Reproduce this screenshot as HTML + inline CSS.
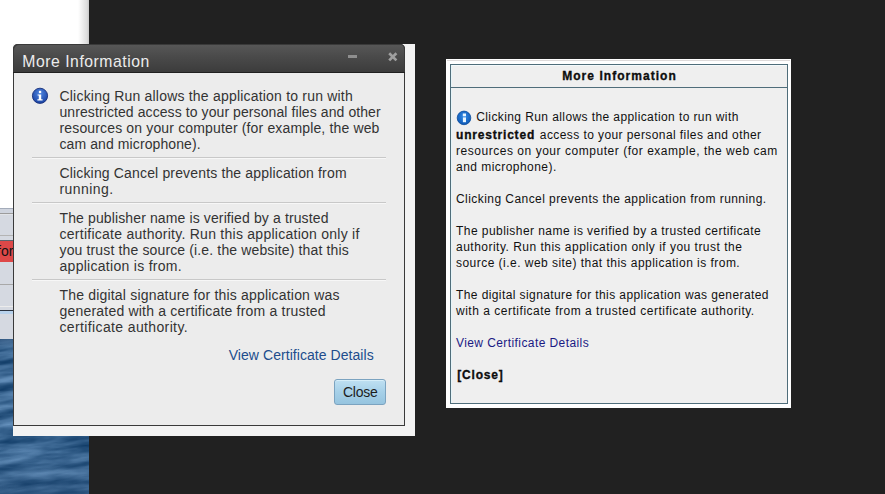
<!DOCTYPE html>
<html><head><meta charset="utf-8">
<style>
html,body{margin:0;padding:0;}
body{width:885px;height:494px;overflow:hidden;position:relative;background:#212121;font-family:"Liberation Sans",sans-serif;}
.a{position:absolute;}
.t{position:absolute;white-space:pre;line-height:16px;}
#pg{left:0;top:0;width:89px;height:208px;background:linear-gradient(to right,#fff 0,#fff 78px,#dcdcdc 87px,#c8c8c8 89px);}
#tbl{left:0;top:208px;width:89px;height:131px;background:#d5d9e1;}

#lpanel{left:13px;top:44px;width:402px;height:392px;background:#f3f3f3;}
#ldlg{left:13px;top:44px;width:390px;height:381px;background:#ececec;border:1px solid #3a3a3a;border-top:none;border-radius:5px 5px 0 0;}
#ltitle{left:-1px;top:0;width:392px;height:28px;border-radius:5px 5px 0 0;background:linear-gradient(#585858,#4a4a4a 45%,#3c3c3c);border-bottom:1px solid #202020;box-shadow:inset 1px 1px 0 #3a3a3a,inset -1px 0 0 #3a3a3a;}
.lt{font-size:14px;color:#333;}
.llink{color:#214c8c;}
.ltitle{font-size:15.75px;color:#ececec;}
.lbtn{font-size:14px;color:#1c1c1c;}
.sep{position:absolute;left:32px;width:354px;height:1px;background:#c8c8c8;box-shadow:0 1px 0 #f7f7f7;}
#btn{left:334px;top:379px;width:50px;height:24px;border:1px solid #7ba3c0;border-radius:3px;background:linear-gradient(#bfe0f2,#a6d0e8 50%,#96c4df);box-shadow:inset 0 1px 0 #d6eef9;}
#rpanel{left:446px;top:59px;width:345px;height:349px;background:#fff;}
#rbox{left:450px;top:64px;width:336px;height:338px;border:1px solid #4f6d7a;background:#efefef;box-shadow:inset 1px 0 0 #e6f4f8,inset 0 1px 0 #f4fafc;}
#rhead{left:0;top:0;width:336px;height:22px;border-bottom:1px solid #4f6d7a;}
.rt{font-size:12px;color:#111;}
.rb{font-weight:bold;-webkit-text-stroke:0.3px #000;}
.rlink{color:#1a1a84;}
</style></head><body>
<div class="a" id="pg"></div>
<div class="a" id="tbl">
 <div class="a" style="left:0;top:0;width:89px;height:1px;background:#a4acba"></div>
 <div class="a" style="left:0;top:1px;width:89px;height:5px;background:#cfd4de"></div>
 <div class="a" style="left:0;top:5px;width:89px;height:1px;background:#9c9c9c"></div>
 <div class="a" style="left:0;top:6px;width:89px;height:1px;background:#e2e4e8"></div>
 <div class="a" style="left:0;top:27px;width:89px;height:1px;background:#b4b4b4"></div>
 <div class="a" style="left:0;top:32px;width:89px;height:1px;background:#5a6470"></div>
 <div class="a" style="left:0;top:33px;width:89px;height:21px;background:#de4848"></div>
 <div class="t" style="left:-3px;top:35px;font-size:14px;color:#111">for</div>
 <div class="a" style="left:0;top:76px;width:89px;height:1px;background:#a8a8a8"></div>
 <div class="a" style="left:0;top:98px;width:89px;height:1px;background:#ececec"></div>
 <div class="a" style="left:0;top:102px;width:89px;height:1px;background:#2a3340"></div>
 <div class="a" style="left:0;top:103px;width:89px;height:3px;background:#b8d2ec"></div>
</div>
<svg class="a" id="ocean" width="89" height="155" style="left:0;top:339px">
 <defs>
 <filter id="wf" x="0" y="0" width="100%" height="100%" color-interpolation-filters="sRGB"><feTurbulence type="fractalNoise" baseFrequency="0.018 0.11" numOctaves="4" seed="11"/><feColorMatrix type="matrix" values="0.5 0 0 0 -0.02  0.5 0 0 0 0.15  0.5 0 0 0 0.32  0 0 0 0 1"/></filter>
 <linearGradient id="og" x1="0" y1="0" x2="0" y2="1"><stop offset="0" stop-color="#1d3f66" stop-opacity="0.55"/><stop offset="0.06" stop-color="#1d3f66" stop-opacity="0"/><stop offset="0.7" stop-color="#1d3f66" stop-opacity="0"/><stop offset="1" stop-color="#1d3f66" stop-opacity="0.3"/></linearGradient>
 </defs>
 <g transform="skewY(-6)"><rect x="0" y="-20" width="89" height="200" filter="url(#wf)"/></g>
 <rect width="89" height="155" fill="url(#og)"/>
</svg>

<div class="a" id="lpanel"></div>
<div class="a" id="ldlg"><div class="a" id="ltitle"></div></div>
<div class="sep" style="top:157px"></div>
<div class="sep" style="top:202px"></div>
<div class="sep" style="top:279px"></div>
<svg class="a" style="left:0;top:0" width="885" height="494">
 <defs>
  <radialGradient id="ig1" cx="0.5" cy="0.35" r="0.6"><stop offset="0" stop-color="#4f86e0"/><stop offset="1" stop-color="#1f48a8"/></radialGradient>
  <radialGradient id="ig2" cx="0.5" cy="0.4" r="0.6"><stop offset="0" stop-color="#2f8ae8"/><stop offset="1" stop-color="#0f58b4"/></radialGradient>
 </defs>
 <rect x="348" y="55" width="9" height="3" fill="#8e8e8e"/>
 <path d="M389.2 53.2L396.4 60.4M396.4 53.2L389.2 60.4" stroke="#a0a0a0" stroke-width="2.7" stroke-linecap="butt"/>
 <circle cx="40" cy="95.8" r="7.6" fill="url(#ig1)" stroke="#18307a" stroke-width="0.9"/>
 <rect x="38.9" y="90.8" width="2.3" height="2.3" fill="#fff"/>
 <path d="M37.6 94.4H41.2V99.3H42.6V100.6H37.4V99.3H38.8V95.6H37.6Z" fill="#fff"/>
</svg>
<div class="a" id="btn"></div>

<div class="a" id="rpanel"></div>
<div class="a" style="left:447px;top:60px;width:343px;height:1px;background:#dedada"></div>
<div class="a" id="rbox"><div class="a" id="rhead"></div></div>
<svg class="a" style="left:0;top:0" width="885" height="494">
 <circle cx="464" cy="117.9" r="6.8" fill="url(#ig2)" stroke="#0b4c9c" stroke-width="0.8"/>
 <rect x="462.8" y="113.5" width="3.2" height="2.8" fill="#e8f6ff"/>
 <rect x="462.9" y="117.4" width="3.1" height="4.8" fill="#e8f6ff"/>
</svg>
<div class="t lt" style="left:59.50px;top:88.15px;letter-spacing:0.200px">Clicking Run allows the application to run with</div>
<div class="t lt" style="left:59.50px;top:104.15px;letter-spacing:0.087px">unrestricted access to your personal files and other</div>
<div class="t lt" style="left:59.50px;top:120.15px;letter-spacing:0.150px">resources on your computer (for example, the web</div>
<div class="t lt" style="left:59.50px;top:136.15px;letter-spacing:0.097px">cam and microphone).</div>
<div class="t lt" style="left:59.50px;top:165.15px;letter-spacing:0.157px">Clicking Cancel prevents the application from</div>
<div class="t lt" style="left:59.50px;top:181.15px;letter-spacing:0.445px">running.</div>
<div class="t lt" style="left:59.50px;top:209.65px;letter-spacing:0.122px">The publisher name is verified by a trusted</div>
<div class="t lt" style="left:59.50px;top:225.65px;letter-spacing:0.260px">certificate authority. Run this application only if</div>
<div class="t lt" style="left:59.50px;top:241.65px;letter-spacing:0.140px">you trust the source (i.e. the website) that this</div>
<div class="t lt" style="left:59.50px;top:257.65px;letter-spacing:0.287px">application is from.</div>
<div class="t lt" style="left:59.50px;top:286.65px;letter-spacing:0.185px">The digital signature for this application was</div>
<div class="t lt" style="left:59.50px;top:302.65px;letter-spacing:0.202px">generated with a certificate from a trusted</div>
<div class="t lt" style="left:59.50px;top:318.65px;letter-spacing:0.369px">certificate authority.</div>
<div class="t lt llink" style="left:228.70px;top:346.95px;letter-spacing:0.058px">View Certificate Details</div>
<div class="t ltitle" style="left:22.30px;top:53.80px;letter-spacing:0.529px">More Information</div>
<div class="t lbtn" style="left:343.00px;top:384.15px;letter-spacing:-0.275px">Close</div>
<div class="t rt" style="left:476.20px;top:109.10px;letter-spacing:0.406px">Clicking Run allows the application to run with</div>
<div class="t rt rb" style="left:456.00px;top:126.70px;letter-spacing:0.806px">unrestricted</div>
<div class="t rt" style="left:539.80px;top:126.70px;letter-spacing:0.417px">access to your personal files and other</div>
<div class="t rt" style="left:456.00px;top:142.80px;letter-spacing:0.533px">resources on your computer (for example, the web cam</div>
<div class="t rt" style="left:456.00px;top:158.80px;letter-spacing:0.455px">and microphone).</div>
<div class="t rt" style="left:456.00px;top:190.80px;letter-spacing:0.440px">Clicking Cancel prevents the application from running.</div>
<div class="t rt" style="left:456.00px;top:222.80px;letter-spacing:0.442px">The publisher name is verified by a trusted certificate</div>
<div class="t rt" style="left:456.00px;top:238.80px;letter-spacing:0.485px">authority. Run this application only if you trust the</div>
<div class="t rt" style="left:456.00px;top:254.80px;letter-spacing:0.466px">source (i.e. web site) that this application is from.</div>
<div class="t rt" style="left:456.00px;top:286.90px;letter-spacing:0.406px">The digital signature for this application was generated</div>
<div class="t rt" style="left:456.00px;top:302.90px;letter-spacing:0.515px">with a certificate from a trusted certificate authority.</div>
<div class="t rt rlink" style="left:456.00px;top:334.90px;letter-spacing:0.415px">View Certificate Details</div>
<div class="t rt rb" style="left:457.30px;top:366.80px;letter-spacing:0.787px">[Close]</div>
<div class="t rt rb" style="left:562.20px;top:67.90px;letter-spacing:1.040px">More Information</div>
</body></html>
